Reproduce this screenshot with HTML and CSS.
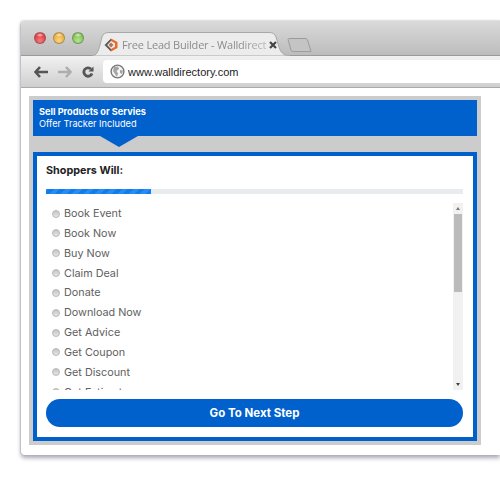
FILE: index.html
```html
<!DOCTYPE html>
<html>
<head>
    <meta charset="utf-8">
    <title>Free Lead Builder - Walldirectory</title>
    <link rel="stylesheet" href="styles.css">
</head>
<body>
<div class="window">
    <div class="tab-strip">
        <div class="lights">
            <span class="light red"></span>
            <span class="light amber"></span>
            <span class="light green"></span>
        </div>
        <div class="tab">
            <svg class="tab-shape" width="198" height="24" viewBox="0 0 198 24">
                <path d="M0 24 C5 23 6 20 8 13 L10 5 C11 2 13 0.5 17 0.5 L177 0.5 C181 0.5 183 2 184 5 L187 15 C189 21 191 23 198 24 Z" fill="#ececec" stroke="#a8a8a8"/>
            </svg>
            <svg class="favicon" width="14" height="14" viewBox="0 0 14 14">
                <path d="M7 0.5 L13.5 4 L13.5 10 L7 13.5 L7 11 L11 8.8 L11 5.2 L7 3 Z" fill="#ea6a2c"/>
                <path d="M7 0.5 L0.5 7 L7 13.5 L7 11 L3.2 7 L7 3 Z" fill="#5a5a5a"/>
                <path d="M7 4.5 L9.5 7 L7 9.5 L4.5 7 Z" fill="#b5724e"/>
            </svg>
            <span class="tab-title">Free Lead Builder - Walldirect</span>
            <svg class="tab-close" width="8" height="8" viewBox="0 0 8 8">
                <path d="M1 1 L7 7 M7 1 L1 7" stroke="#444" stroke-width="2.2"/>
            </svg>
        </div>
        <svg class="new-tab" width="25" height="14" viewBox="0 0 25 14">
            <path d="M1 1.5 C1 1 1.5 0.5 2 0.5 L18 0.5 C19.5 0.5 20 1 20.5 2 L24 13.5 L6 13.5 C5 13.5 4.5 13 4 12 Z" fill="#c4c4c4" stroke="#9c9c9c"/>
        </svg>
    </div>
    <div class="toolbar">
        <div class="nav">
            <svg width="14" height="12" viewBox="0 0 14 12"><path d="M6 1 L1.5 6 L6 11 M2 6 H14" fill="none" stroke="#555" stroke-width="2.6"/></svg>
            <svg width="14" height="12" viewBox="0 0 14 12"><path d="M8 1 L12.5 6 L8 11 M12 6 H0" fill="none" stroke="#aeaeae" stroke-width="2.6"/></svg>
            <svg width="12" height="12" viewBox="0 0 12 12"><path d="M10 7.5 A4.2 4.2 0 1 1 9 3" fill="none" stroke="#555" stroke-width="2.8"/><path d="M11.5 0.5 V5.5 H6.5 Z" fill="#555"/></svg>
        </div>
        <div class="address">
            <svg width="15" height="15" viewBox="0 0 15 15">
                <circle cx="7.5" cy="7.5" r="6.4" fill="#f4f4f4" stroke="#777" stroke-width="1.4"/>
                <path d="M4 3 L8 2.5 L9 5 L6.5 7 L8 9.5 L7 13 L5 10 L3 7 Z M10 6 L13 6.5 L12 10 L10 9 Z" fill="#a4a4a4"/>
            </svg>
            <span class="url">www.walldirectory.com</span>
        </div>
    </div>
    <div class="page">
        <div class="panel">
            <div class="banner">
                <div class="banner-title">Sell Products or Servies</div>
                <div class="banner-sub">Offer Tracker Included</div>
            </div>
            <div class="notch"></div>
            <div class="card">
                <div class="card-title">Shoppers Will:</div>
                <div class="progress"><div class="progress-bar"></div></div>
                <div class="list-box">
                    <div class="options">
                        <label class="option"><span class="radio"></span>Book Event</label>
                        <label class="option"><span class="radio"></span>Book Now</label>
                        <label class="option"><span class="radio"></span>Buy Now</label>
                        <label class="option"><span class="radio"></span>Claim Deal</label>
                        <label class="option"><span class="radio"></span>Donate</label>
                        <label class="option"><span class="radio"></span>Download Now</label>
                        <label class="option"><span class="radio"></span>Get Advice</label>
                        <label class="option"><span class="radio"></span>Get Coupon</label>
                        <label class="option"><span class="radio"></span>Get Discount</label>
                        <label class="option"><span class="radio"></span>Get Estimate</label>
                    </div>
                    <div class="scrollbar">
                        <span class="arrow up"></span>
                        <div class="track"><div class="thumb"></div></div>
                        <span class="arrow down"></span>
                    </div>
                </div>
                <div class="btn">Go To Next Step</div>
            </div>
        </div>
    </div>
</div>
</body>
</html>
```

FILE: styles.css
```css
* {
    box-sizing: border-box;
    padding: 0;
    margin: 0;
}

html, body {
    height: 483px;
    overflow: hidden;
    background-color: #ffffff;
}

body {
    padding: 20px 0 0 21px;
    font-family: "Inter", "Liberation Sans", sans-serif;
}

.window {
    width: 479px;
    height: 435px;
    background-color: #ffffff;
    border-radius: 4px 0 0 4px;
    box-shadow: 0 3px 4px rgba(110, 110, 135, 0.6), -1px 0 1px rgba(150, 150, 150, 0.35);
}

.tab-strip {
    display: flex;
    height: 36px;
    padding-left: 12px;
    background: linear-gradient(#dadada, #bcbcbc);
    border-top: 1px solid #e2e2e2;
    border-bottom: 1px solid #9a9a9a;
    border-radius: 4px 0 0 0;
}

.lights {
    display: flex;
    gap: 7px;
    width: 59px;
    padding: 11px 0 0 1px;
}

.light {
    width: 12px;
    height: 12px;
    border-radius: 50%;
    border: 1px solid rgba(90, 90, 90, 0.45);
}

.red {
    background: radial-gradient(ellipse 4px 2px at 50% 20%, rgba(255, 255, 255, 0.7), transparent), radial-gradient(circle at 50% 75%, #f77a7a, #d6202a);
}

.amber {
    background: radial-gradient(ellipse 4px 2px at 50% 20%, rgba(255, 255, 255, 0.7), transparent), radial-gradient(circle at 50% 75%, #fbd67a, #e59a22);
}

.green {
    background: radial-gradient(ellipse 4px 2px at 50% 20%, rgba(255, 255, 255, 0.7), transparent), radial-gradient(circle at 50% 75%, #b6e68a, #68b03c);
}

.tab {
    position: relative;
    display: flex;
    align-items: center;
    flex-shrink: 0;
    width: 198px;
    height: 24px;
    margin-top: 11px;
    padding: 1px 0 0 12px;
}

.tab-shape {
    position: absolute;
    left: 0;
    top: 0;
}

.favicon, .tab-title, .tab-close {
    position: relative;
}

.tab-title {
    width: 146px;
    margin-left: 4px;
    white-space: nowrap;
    font-family: "Open Sans", sans-serif;
    font-size: 11px;
    letter-spacing: -0.2px;
    color: #8c8c8c;
    -webkit-mask-image: linear-gradient(90deg, #000 80%, rgba(0, 0, 0, 0.45));
    mask-image: linear-gradient(90deg, #000 80%, rgba(0, 0, 0, 0.45));
}

.tab-close {
    margin-left: 1px;
}

.new-tab {
    margin: 17px 0 0 -3px;
}

.toolbar {
    display: flex;
    align-items: center;
    height: 32px;
    padding: 4px 0 4px 13px;
    background: linear-gradient(#f1f1f1, #cfcfcf);
    border-bottom: 1px solid #aaaaaa;
}

.nav {
    display: flex;
    align-items: center;
    gap: 10px;
    width: 69px;
}

.address {
    display: flex;
    align-items: center;
    gap: 3px;
    flex: 1;
    height: 23px;
    padding-left: 7px;
    background-color: #ffffff;
    border-radius: 4px 0 0 4px;
}

.url {
    font-family: "Liberation Sans", sans-serif;
    font-size: 11px;
    color: #222222;
}

.page {
    padding: 8px 0 0 8px;
}

.panel {
    width: 452px;
    height: 349px;
    padding: 4px;
    background-color: #cccccc;
}

.banner {
    height: 36px;
    padding: 6px 0 0 6px;
    background-color: #0060cc;
    color: #ffffff;
    font-size: 9.2px;
    line-height: 11.5px;
}

.banner-title {
    font-weight: 700;
}

.notch {
    width: 0;
    height: 0;
    margin-left: 67px;
    border-left: 19px solid transparent;
    border-right: 19px solid transparent;
    border-top: 11px solid #0060cc;
}

.card {
    height: 289px;
    margin-top: 5px;
    padding: 8px 10px 0 9px;
    background-color: #ffffff;
    border: 4px solid #0060cc;
}

.card-title {
    font-size: 10.8px;
    line-height: 14px;
    font-weight: 700;
    color: #222222;
}

.progress {
    height: 5px;
    margin-top: 11px;
    background-color: #e9ecef;
}

.progress-bar {
    width: 25.2%;
    height: 100%;
    background: repeating-linear-gradient(-45deg, #0f7cf0 0 4px, #2a8cf3 4px 8px);
}

.list-box {
    display: flex;
    justify-content: space-between;
    height: 187px;
    margin-top: 9px;
    overflow: hidden;
}

.options {
    padding: 0.6px 0 0 6px;
}

.option {
    display: flex;
    align-items: center;
    height: 19.85px;
    font-size: 10.8px;
    color: #606060;
}

.radio {
    width: 8px;
    height: 8px;
    margin-right: 4px;
    background: linear-gradient(#c4c4c4, #e6e6e6);
    border: 1px solid #b8b8b8;
    border-radius: 50%;
}

.scrollbar {
    display: flex;
    flex-direction: column;
    align-items: center;
    width: 10px;
    background-color: #f1f1f1;
}

.arrow {
    flex-shrink: 0;
    width: 0;
    height: 0;
    margin: 4px 0;
    border-left: 2.5px solid transparent;
    border-right: 2.5px solid transparent;
}

.arrow.up {
    border-bottom: 3px solid #777777;
}

.arrow.down {
    border-top: 3px solid #444444;
}

.track {
    flex: 1;
    width: 100%;
}

.thumb {
    width: 8px;
    height: 78px;
    margin: 0 auto;
    background-color: #bbbbbb;
}

.btn {
    height: 28px;
    margin-top: 9px;
    background-color: #0060cc;
    border-radius: 14px;
    color: #ffffff;
    font-size: 11.5px;
    font-weight: 700;
    line-height: 28px;
    text-align: center;
}
```
